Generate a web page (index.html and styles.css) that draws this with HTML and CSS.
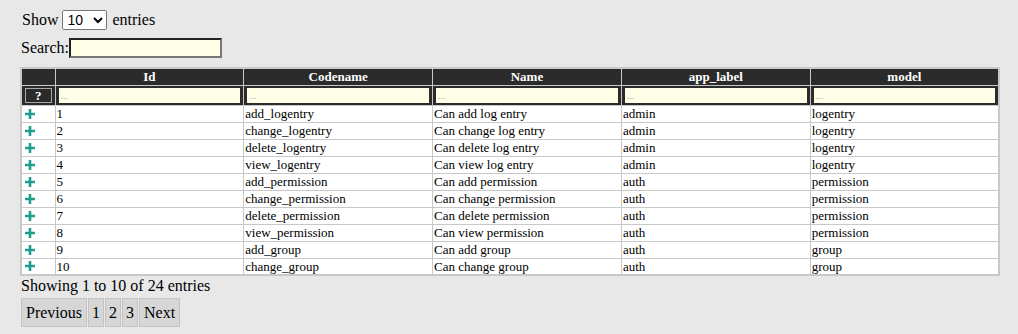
FILE: index.html
```html
<!DOCTYPE html>
<html lang="en">
<head>
    <meta charset="UTF-8">
    <title>Permissions</title>
    <link rel="stylesheet" href="styles.css">
</head>
<body>
    <div class="length">
        <label>Show
            <select>
                <option>10</option>
                <option>25</option>
                <option>50</option>
            </select>
            entries</label>
    </div>
    <div class="search">
        <label>Search:<input type="text" class="search-input"></label>
    </div>

    <table class="grid">
        <colgroup>
            <col class="col-ctrl">
            <col><col><col><col><col>
        </colgroup>
        <thead>
            <tr>
                <th></th>
                <th>Id</th>
                <th>Codename</th>
                <th>Name</th>
                <th>app_label</th>
                <th>model</th>
            </tr>
            <tr class="filters">
                <th><span class="help">?</span></th>
                <th><input type="text" placeholder="..."></th>
                <th><input type="text" placeholder="..."></th>
                <th><input type="text" placeholder="..."></th>
                <th><input type="text" placeholder="..."></th>
                <th><input type="text" placeholder="..."></th>
            </tr>
        </thead>
        <tbody id="rows"></tbody>
    </table>

    <div class="info">Showing 1 to 10 of 24 entries</div>
    <div class="paging">
        <span class="page-btn wide">Previous</span>
        <span class="page-btn">1</span>
        <span class="page-btn">2</span>
        <span class="page-btn">3</span>
        <span class="page-btn wide">Next</span>
    </div>

    <script>
        const rows = [
            [1, 'add_logentry', 'Can add log entry', 'admin', 'logentry'],
            [2, 'change_logentry', 'Can change log entry', 'admin', 'logentry'],
            [3, 'delete_logentry', 'Can delete log entry', 'admin', 'logentry'],
            [4, 'view_logentry', 'Can view log entry', 'admin', 'logentry'],
            [5, 'add_permission', 'Can add permission', 'auth', 'permission'],
            [6, 'change_permission', 'Can change permission', 'auth', 'permission'],
            [7, 'delete_permission', 'Can delete permission', 'auth', 'permission'],
            [8, 'view_permission', 'Can view permission', 'auth', 'permission'],
            [9, 'add_group', 'Can add group', 'auth', 'group'],
            [10, 'change_group', 'Can change group', 'auth', 'group']
        ];

        const plus = '<svg class="plus" width="10" height="10" viewBox="0 0 10 10"><path d="M5 0v10M0 5h10" stroke="#1f9e8e" stroke-width="2.6"/></svg>';
        const tbody = document.getElementById('rows');
        rows.forEach(r => {
            tbody.innerHTML += `<tr><td class="ctrl">${plus}</td>${r.map(v => `<td>${v}</td>`).join('')}</tr>`;
        });
    </script>
</body>
</html>
```

FILE: styles.css
```css
* {
    box-sizing: border-box;
}

body {
    margin: 0;
    padding: 10px 17px 0 20px;
    background: #e8e8e8;
    font-family: "Liberation Serif", serif;
    font-size: 16px;
    color: #000;
}

.length {
    height: 20px;
    line-height: 20px;
    padding-left: 2px;
}

.length select {
    width: 45px;
    height: 20px;
    font-family: "Liberation Sans", sans-serif;
    font-size: 14px;
    margin: 0 1px 0 0;
    vertical-align: top;
}

.search {
    margin-top: 8px;
    height: 20px;
    line-height: 20px;
    padding-left: 1px;
}

.search-input {
    width: 153px;
    height: 20px;
    vertical-align: top;
    background: #ffffe8;
    border: 2px solid;
    border-color: #222 #777 #777 #222;
}

.grid {
    margin-top: 9px;
    width: 980px;
    border-collapse: collapse;
    table-layout: fixed;
    border: 2px solid #c8c8c8;
    font-size: 13px;
}

.col-ctrl {
    width: 34px;
}

.grid th,
.grid td {
    border: 1px solid #c8c8c8;
    padding: 0 1px;
    height: 17px;
    line-height: 15px;
    white-space: nowrap;
    overflow: hidden;
}

.grid th {
    background: #2b2b2b;
    color: #fff;
    font-weight: bold;
    text-align: center;
}

.grid .filters th {
    height: 20px;
    padding: 2px 3px;
}

.filters input {
    display: block;
    width: 100%;
    height: 15px;
    border: 0;
    padding: 0 2px;
    background: #ffffe8;
    font-family: "Liberation Serif", serif;
    font-size: 10px;
}

.filters input::placeholder {
    color: #aaa;
}

.help {
    display: block;
    height: 15px;
    line-height: 13px;
    border: 1px solid #aaa;
    font-size: 13px;
}

.grid td {
    background: #fff;
}

.grid td.ctrl {
    padding-left: 3px;
}

.plus {
    display: block;
}

.info {
    margin-top: 1px;
    padding-left: 1px;
    line-height: 18px;
}

.paging {
    display: flex;
    gap: 1px;
    margin-top: 3px;
    padding-left: 1px;
}

.page-btn {
    background: #d6d6d6;
    border: 1px solid #c4c4c4;
    padding: 0 3px;
    height: 29px;
    line-height: 27px;
}

.page-btn.wide {
    padding: 0 4px;
}
```
